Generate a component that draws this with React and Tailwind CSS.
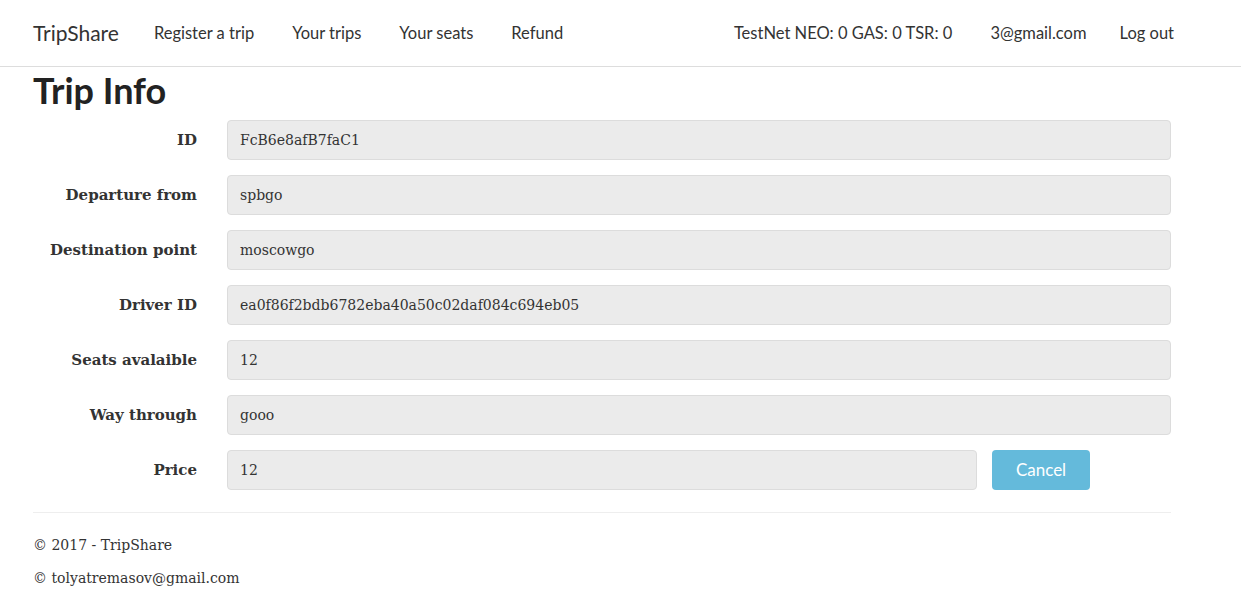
const navFont = { fontFamily: 'Lato, "Open Sans", sans-serif' }

const fields = [
  ['ID', 'FcB6e8afB7faC1'],
  ['Departure from', 'spbgo'],
  ['Destination point', 'moscowgo'],
  ['Driver ID', 'ea0f86f2bdb6782eba40a50c02daf084c694eb05'],
  ['Seats avalaible', '12'],
  ['Way through', 'gooo'],
]

function Field({ label, value, children }) {
  return (
    <div className="flex items-center h-10">
      <label className="w-[164px] shrink-0 text-right font-bold text-[15px] text-[#333]">{label}</label>
      <div className="ml-[30px] flex flex-1 items-center">{children || (
        <div className="flex-1 h-10 flex items-center px-3 bg-[#ebebeb] border border-[#dcdcdc] rounded text-[14px] text-[#333]">{value}</div>
      )}</div>
    </div>
  )
}

export default function App() {
  return (
    <div className="min-h-[614px] bg-white text-[#333]" style={{ fontFamily: '"DejaVu Serif", Georgia, serif' }}>
      <nav className="h-[67px] border-b border-[#dddddd] flex items-center pl-[33px] pr-[67px] text-[16.5px] text-[#333]" style={navFont}>
        <span className="text-[21px] mr-[35px]">TripShare</span>
        <div className="flex gap-[38px]">
          <span>Register a trip</span>
          <span>Your trips</span>
          <span>Your seats</span>
          <span>Refund</span>
        </div>
        <div className="ml-auto flex">
          <span className="mr-[38px]">TestNet NEO: 0 GAS: 0 TSR: 0</span>
          <span className="mr-[33px]">3@gmail.com</span>
          <span>Log out</span>
        </div>
      </nav>

      <main className="pl-[33px] w-[1171px]">
        <h1 className="text-[36px] font-bold leading-none mt-[5px] mb-[12px] text-[#222]" style={navFont}>Trip Info</h1>
        <div className="flex flex-col gap-[15px]">
          {fields.map(([l, v]) => <Field key={l} label={l} value={v} />)}
          <Field label="Price">
            <div className="w-[750px] h-10 flex items-center px-3 bg-[#ebebeb] border border-[#dcdcdc] rounded text-[14px] text-[#333]">12</div>
            <button className="ml-[15px] w-[98px] h-10 rounded bg-[#64badb] text-white text-[17px]" style={navFont}>Cancel</button>
          </Field>
        </div>
        <hr className="mt-[22px] border-t border-[#eeeeee]" />
        <footer className="pt-[22px] text-[14px] text-[#333]">
          <p>© 2017 - TripShare</p>
          <p className="mt-[12px]">© tolyatremasov@gmail.com</p>
        </footer>
      </main>
    </div>
  )
}
